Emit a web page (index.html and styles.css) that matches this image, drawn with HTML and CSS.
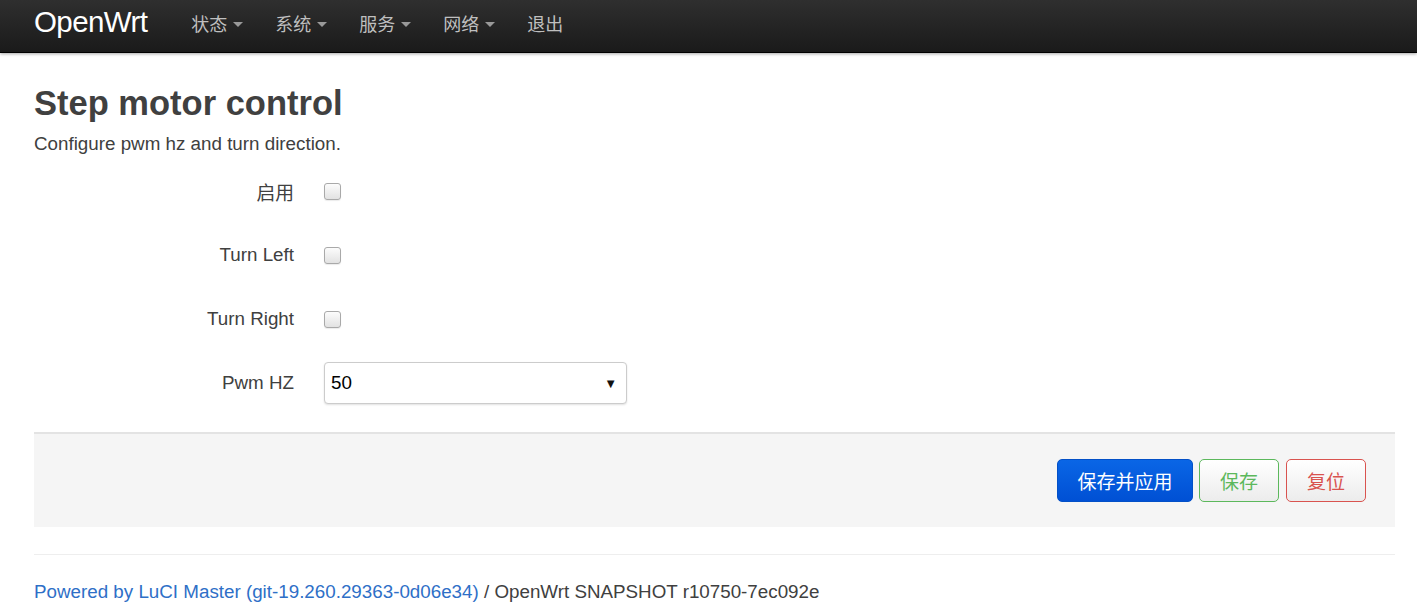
FILE: index.html
```html
<!DOCTYPE html>
<html lang="zh">
<head>
<meta charset="utf-8">
<title>Step motor control - OpenWrt</title>
<link rel="stylesheet" href="styles.css">
</head>
<body>
<header class="navbar">
  <a class="brand" href="#">OpenWrt</a>
  <ul class="nav">
    <li><a href="#">状态<span class="caret"></span></a></li>
    <li><a href="#">系统<span class="caret"></span></a></li>
    <li><a href="#">服务<span class="caret"></span></a></li>
    <li><a href="#">网络<span class="caret"></span></a></li>
    <li><a href="#">退出</a></li>
  </ul>
</header>
<main class="container">
  <h2 class="title">Step motor control</h2>
  <p class="desc">Configure pwm hz and turn direction.</p>
  <div class="form">
    <div class="row">
      <label class="label">启用</label>
      <div class="field"><input type="checkbox" class="cb"></div>
    </div>
    <div class="row">
      <label class="label">Turn Left</label>
      <div class="field"><input type="checkbox" class="cb"></div>
    </div>
    <div class="row">
      <label class="label">Turn Right</label>
      <div class="field"><input type="checkbox" class="cb"></div>
    </div>
    <div class="row">
      <label class="label">Pwm HZ</label>
      <div class="field">
        <div class="select"><span>50</span><span class="arrow">▼</span></div>
      </div>
    </div>
  </div>
  <div class="actions">
    <button class="btn btn-apply">保存并应用</button>
    <button class="btn btn-save">保存</button>
    <button class="btn btn-reset">复位</button>
  </div>
  <footer class="footer">
    <a href="#">Powered by LuCI Master (git-19.260.29363-0d06e34)</a> / OpenWrt SNAPSHOT r10750-7ec092e
  </footer>
</main>
</body>
</html>
```
FILE: styles.css
```css
* { box-sizing: border-box; }
html, body { margin: 0; padding: 0; }
body {
  font-family: "Liberation Sans", "Noto Sans CJK SC", Arial, sans-serif;
  color: #404040;
  background: #fff;
  font-size: 18.8px;
}
a { text-decoration: none; }

.navbar {
  height: 53px;
  background: linear-gradient(to bottom, #2f2f2f, #1a1a1a);
  border-bottom: 1px solid #000;
  box-shadow: 0 1px 3px rgba(0,0,0,0.35);
  display: flex;
  align-items: center;
  padding-left: 34px;
}
.brand {
  color: #fff;
  font-size: 29.5px;
  letter-spacing: -0.6px;
  margin-right: 28px;
  margin-top: -8px;
}
.nav {
  list-style: none;
  margin: 0;
  padding: 0;
  display: flex;
  margin-top: -6px;
}
.nav a {
  display: flex;
  align-items: center;
  color: #bfbfbf;
  font-size: 18px;
  padding: 0 16px;
  height: 52px;
}
.caret {
  display: inline-block;
  width: 0;
  height: 0;
  margin-left: 6px;
  margin-top: 2px;
  border-left: 5px solid transparent;
  border-right: 5px solid transparent;
  border-top: 5px solid #999;
}

.container {
  padding: 0 22px 0 34px;
}
.title {
  font-size: 34.5px;
  line-height: 36px;
  font-weight: bold;
  margin: 32px 0 11px;
  color: #404040;
}
.desc {
  margin: 0;
  line-height: 24px;
}

.form {
  margin-top: 3px;
}
.row {
  display: grid;
  grid-template-columns: 260px 1fr;
  column-gap: 30px;
  align-items: center;
  height: 64px;
}
.label {
  text-align: right;
  color: #404040;
}
.field { display: flex; align-items: center; }
.cb {
  appearance: none;
  -webkit-appearance: none;
  width: 17px;
  height: 17px;
  margin: 0;
  border: 1px solid #a9a9a9;
  border-radius: 3px;
  background: linear-gradient(to bottom, #fcfcfc, #e2e2e2);
  box-shadow: 0 1px 1px rgba(0,0,0,0.08);
}
.select {
  width: 303px;
  height: 42px;
  border: 1px solid #ccc;
  border-radius: 4px;
  box-shadow: 0 1px 2px rgba(0,0,0,0.12);
  display: flex;
  align-items: center;
  justify-content: space-between;
  padding: 0 9px 0 6px;
  color: #000;
  background: #fff;
}
.arrow { font-size: 13px; color: #111; }

.actions {
  margin-top: 17px;
  background: #f5f5f5;
  border-top: 2px solid #e3e3e3;
  height: 95px;
  display: flex;
  justify-content: flex-end;
  align-items: center;
  gap: 6px;
  padding: 0 29px 0 0;
}
.btn {
  font-family: "Liberation Sans", "Noto Sans CJK SC", Arial, sans-serif;
  font-size: 19px;
  height: 43px;
  border-radius: 5px;
  cursor: pointer;
}
.btn-apply {
  width: 136px;
  color: #fff;
  background: linear-gradient(to bottom, #0a66e6, #0050d4);
  border: 1px solid #0350c7;
}
.btn-save {
  width: 80px;
  color: #5cb85c;
  border: 1px solid #5cb85c;
  background: linear-gradient(to bottom, #fff, #ececec);
}
.btn-reset {
  width: 80px;
  margin-left: 1px;
  color: #d9534f;
  border: 1px solid #d9534f;
  background: linear-gradient(to bottom, #fff, #ececec);
}

.footer {
  margin-top: 27px;
  border-top: 1px solid #eee;
  padding-top: 25px;
  line-height: 24px;
  color: #404040;
}
.footer a { color: #2e6fc7; }
```
